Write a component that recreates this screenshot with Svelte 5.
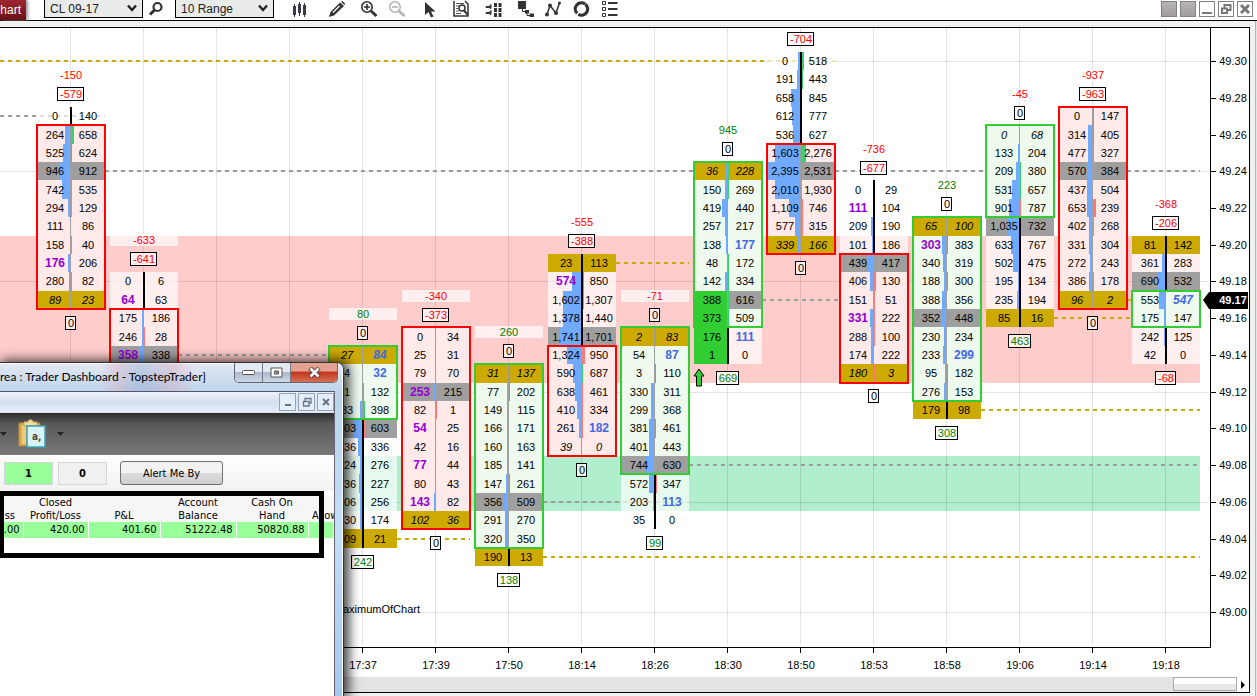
<script>
  let width = $state(1249);
  let height = $state(649);

  let instrument = $state('CL 09-17');
  let period = $state('10 Range');

  const TOP_PRICE = 49.318;
  const TICKS = 33.7;
  const STEP = 73;
  const HALF = 34;

  // rows run down from `high`, one per tick: "bid ask", * = bold, / = italic
  const bars = [
    { time: '', high: 49.27, delta: -150, top: -579, bottom: 0, dir: 'down', body: [1, 10], poc: 3, gold: [10],
      rows: '0 140|264 658|525 624|946 912|742 535|294 129|111 86|158 40|*176 206|280 82|/89 /23' },
    { time: '', high: 49.18, delta: -633, top: -641, bottom: null, dir: 'down', body: [2, 6], poc: 4, gold: [],
      rows: '0 6|*64 63|175 186|246 28|*358 338' },
    null,
    null,
    { time: '17:37', high: 49.14, delta: 80, top: 0, bottom: 242, dir: 'up', body: [0, 3], poc: 4, gold: [0, 10],
      rows: '/27 /*84|4 *32|1 132|83 398|903 603|436 336|224 276|336 227|206 256|230 174|109 21' },
    { time: '17:39', high: 49.15, delta: -340, top: -373, bottom: 0, dir: 'down', body: [0, 10], poc: 3, gold: [10],
      rows: '0 34|25 31|79 70|*253 215|82 1|*54 25|42 16|*77 44|80 43|*143 82|/102 /36' },
    { time: '17:50', high: 49.13, delta: 260, top: 0, bottom: 138, dir: 'up', body: [0, 9], poc: 7, gold: [0, 10],
      rows: '/31 /137|77 202|149 115|166 171|160 163|185 141|147 261|356 509|291 270|320 350|190 13' },
    { time: '18:14', high: 49.19, delta: -555, top: -388, bottom: 0, dir: 'down', body: [5, 10], poc: 4, gold: [0],
      rows: '23 113|*574 850|1,602 1,307|1,378 1,440|1,741 1,701|1,324 950|590 687|638 461|410 334|261 *182|/39 /0' },
    { time: '18:26', high: 49.15, delta: -71, top: 0, bottom: 99, dir: 'up', body: [0, 7], poc: 7, gold: [0],
      rows: '/2 /83|54 *87|3 110|330 311|299 368|381 461|401 443|744 630|572 347|203 *113|35 0' },
    { time: '18:30', high: 49.24, delta: 945, top: 0, bottom: 669, dir: 'up', body: [0, 8], poc: 7, gold: [0], stacked: 7,
      rows: '/36 /228|150 269|419 440|257 217|138 *177|48 172|142 334|388 616|373 509|176 *111|1 0' },
    { time: '18:50', high: 49.3, delta: null, top: -704, bottom: 0, dir: 'down', body: [5, 10], poc: 6, gold: [10],
      rows: '0 518|191 443|658 845|612 777|536 627|1,603 2,276|2,395 2,531|2,010 1,930|1,109 746|577 315|/339 /166' },
    { time: '18:53', high: 49.23, delta: -736, top: -677, bottom: 0, dir: 'down', body: [4, 10], poc: 4, gold: [10],
      rows: '0 29|*111 104|209 190|101 186|439 417|406 130|151 51|*331 222|288 100|174 222|/180 /3' },
    { time: '18:58', high: 49.21, delta: 223, top: 0, bottom: 308, dir: 'up', body: [0, 9], poc: 5, gold: [0, 10],
      rows: '/65 /100|*303 383|340 319|188 300|388 356|352 448|230 234|233 *299|95 182|276 153|179 98' },
    { time: '19:06', high: 49.26, delta: -45, top: 0, bottom: 463, dir: 'up', body: [0, 4], poc: 5, gold: [10],
      rows: '/0 /68|133 204|209 380|531 657|901 787|1,035 732|633 767|502 475|195 134|235 194|85 16' },
    { time: '19:14', high: 49.27, delta: -937, top: -963, bottom: 0, dir: 'down', body: [0, 10], poc: 3, gold: [10],
      rows: '0 147|314 405|477 327|570 384|437 504|653 239|402 268|331 304|272 243|386 178|/96 /2' },
    { time: '19:18', high: 49.2, delta: -368, top: -206, bottom: -68, dir: 'up', body: [3, 4], poc: 2, gold: [0],
      rows: '81 142|361 283|690 532|553 /*547|175 147|242 125|42 0' }
  ];

  // naked levels: from the right side of one bar to the left or right side of another
  const levels = [
    { price: 49.3, kind: 'gold', from: -2, to: 10, through: true },
    { price: 49.27, kind: 'gray', from: -2, to: 0, through: true },
    { price: 49.24, kind: 'gray', from: 0, to: 9 },
    { price: 49.14, kind: 'gray', from: 1, to: 4 },
    { price: 49.04, kind: 'gold', from: 4, to: 5, through: true },
    { price: 49.03, kind: 'gold', from: 6, to: 15, through: true },
    { price: 49.06, kind: 'gray', from: 6, to: 8, through: true },
    { price: 49.19, kind: 'gold', from: 7, to: 8, through: true },
    { price: 49.08, kind: 'gray', from: 8, to: 15, through: true },
    { price: 49.17, kind: 'gray', from: 9, to: 11 },
    { price: 49.24, kind: 'gray', from: 10, to: 13 },
    { price: 49.11, kind: 'gold', from: 12, to: 15, through: true },
    { price: 49.16, kind: 'gold', from: 13, to: 15 },
    { price: 49.24, kind: 'gray', from: 14, to: 15, through: true },
    { price: 49.17, kind: 'gold', from: 14, to: 15 }
  ];

  const zones = [
    { high: 49.205, low: 49.125, color: '#ffcccc' },
    { high: 49.085, low: 49.055, color: '#b1eecd' }
  ];

  const prices = Array.from({ length: 16 }, (_, i) => 49.3 - i * 0.02);
  const gridPrices = [49.3, 49.24, 49.18, 49.12, 49.06, 49];

  const plotHeight = $derived(height - 30);
  const tick = $derived(plotHeight / TICKS);
  const axisX = $derived(width - 39);

  function yOf(price) {
    return Math.round((TOP_PRICE - price) * 100 * tick);
  }

  function xOf(i) {
    return axisX - 44 - (bars.length - 1 - i) * STEP;
  }

  function parseCell(raw) {
    const text = raw.replace(/[*/]/g, '');
    return { text, value: Number(text.replace(',', '')), bold: raw.includes('*'), italic: raw.includes('/') };
  }

  function parseRows(bar) {
    return bar.rows.split('|').map((row, i) => {
      const [bid, ask] = row.split(' ').map(parseCell);
      const price = bar.high - i * 0.01;
      const y = yOf(price + 0.005);
      const diff = ask.value - bid.value;
      return {
        bid, ask, y, diff,
        h: yOf(price - 0.005) - y,
        mid: yOf(price),
        volume: Math.round((bid.value + ask.value) * 0.0067),
        deltaWidth: Math.round(Math.abs(diff) * 0.0067),
        kind: bar.gold.includes(i) ? 'gold' : bar.poc === i ? 'poc' : i >= bar.body[0] && i <= bar.body[1] ? bar.dir : 'plain',
        wick: i < bar.body[0] || i > bar.body[1],
        stacked: bar.stacked !== undefined && i >= bar.stacked
      };
    });
  }

  function sign(n) {
    return n < 0 ? 'neg' : n > 0 ? 'pos' : 'zero';
  }

  function tagWidth(n) {
    return Math.round(String(Math.abs(n)).length * 6.1 + (n < 0 ? 4 : 0)) + 4;
  }
</script>

{#snippet tag(value, x, y)}
  {@const w = tagWidth(value)}
  <rect class="tag" x={x - Math.ceil(w / 2) - 0.5} y={y - 6.5} width={w} height="13" />
  <text class={sign(value)} {x} y={y + 4}>{value}</text>
{/snippet}

<div class="page">
  <header class="toolbar">
    <button class="tab">hart</button>
    <div class="picker first">
      <select aria-label="Instrument" bind:value={instrument}>
        <option>CL 09-17</option>
      </select>
      <svg width="10" height="8" viewBox="0 0 10 8"><path d="M1 1.5 5 6 9 1.5" fill="none" stroke="#222" stroke-width="2.4" /></svg>
    </div>
    <button class="icon search" aria-label="Find instrument">
      <svg viewBox="0 0 16 16"><circle cx="9.5" cy="6" r="4" fill="none" stroke="#333" stroke-width="2.2" /><path d="M6.5 9 2 13.5" stroke="#333" stroke-width="3" /></svg>
    </button>
    <div class="picker">
      <select aria-label="Period" bind:value={period}>
        <option>10 Range</option>
      </select>
      <svg width="10" height="8" viewBox="0 0 10 8"><path d="M1 1.5 5 6 9 1.5" fill="none" stroke="#222" stroke-width="2.4" /></svg>
    </div>

    <button class="icon style" aria-label="Bar style">
      <svg viewBox="0 0 16 16"><path d="M3.5 3v13M8.5 1v14M13.5 2v14" stroke="#4a2f3a" /><path d="M3.5 5v9M8.5 3v9M13.5 4v10" stroke="#3a3a4a" stroke-width="3" /></svg>
    </button>
    <div class="tools">
      <button class="icon" aria-label="Draw">
        <svg viewBox="0 0 16 16"><path d="M0 16 1.5 11 11 1.5 15 5 5 14.5Z" fill="#333" /><path d="M4 11.5 10.5 5" stroke="#fff" stroke-width="1.3" /><path d="M12 1 13.5 0 16 2.5 15.5 4" fill="#333" /></svg>
      </button>
      <div class="pair">
        <button class="icon" aria-label="Zoom in">
          <svg viewBox="0 0 16 16"><g fill="none" stroke="#333"><circle cx="6" cy="6" r="5.2" stroke-width="1.6" /><path d="M3 6h6M6 3v6" stroke-width="1.6" /><path d="m10 10 5.5 5" stroke-width="3" /></g></svg>
        </button>
        <button class="icon" aria-label="Zoom out" disabled>
          <svg viewBox="0 0 16 16"><g fill="none" stroke="#b4b4b4"><circle cx="6" cy="6" r="5.2" stroke-width="1.6" /><path d="M3 6h6" stroke-width="1.6" /><path d="m10 10 5.5 5" stroke-width="3" /></g></svg>
        </button>
      </div>
      <button class="icon" aria-label="Pointer">
        <svg viewBox="0 0 16 16"><path d="M4 1v13l3.5-3 2.5 5.500 2.500-1-2.500-5h4.500Z" fill="#333" /></svg>
      </button>
      <button class="icon" aria-label="Data box">
        <svg viewBox="0 0 16 16"><path d="M1 0v15h14V3L12 0" fill="none" stroke="#333" stroke-width="1.5" /><path d="M3 2.5h8M3 5h3M3 7.500h2M3 10h3M3 12.500h5" stroke="#555" /><circle cx="9" cy="7" r="3" fill="#fff" stroke="#333" stroke-width="1.5" /><path d="m11 9.500 4 4.500" stroke="#333" stroke-width="2" /></svg>
      </button>
      <button class="icon" aria-label="Strategies">
        <svg viewBox="0 0 16 16"><path d="M1 5.500h3l2-2v4l-2-1H1zM1 11.500h3l2-2v4l-2-1H1z" fill="#333" stroke="#333" /><path d="M10.500 2v14M15 2v14" stroke="#333" stroke-width="3" stroke-dasharray="4 1" /></svg>
      </button>
      <div class="pair">
        <button class="icon" aria-label="Drawing objects">
          <svg viewBox="0 0 16 16"><path d="M1 0h8v8H1zM8 9h4v3.500H8zM12.500 12.500H17V16h-4.500z" fill="#333" /><path d="M5.500 7v3.500H9M10 11v3.500h3" fill="none" stroke="#333" /></svg>
        </button>
        <button class="icon" aria-label="Indicators">
          <svg viewBox="0 0 16 16"><path d="M2 13.500 5 4.500 11 12 14.500 2" fill="none" stroke="#333" stroke-width="1.500" /><g fill="#333"><circle cx="2" cy="13.500" r="2" /><circle cx="5" cy="4.500" r="2" /><circle cx="11" cy="12" r="2" /><circle cx="14.500" cy="2" r="1.500" /></g></svg>
        </button>
        <button class="icon" aria-label="Reload">
          <svg viewBox="0 0 16 16"><circle cx="8.500" cy="8" r="6.200" fill="none" stroke="#333" stroke-width="3.200" stroke-dasharray="18 1.5 18 1.5" transform="rotate(-50 8.500 8)" /></svg>
        </button>
        <button class="icon" aria-label="Properties">
          <svg viewBox="0 0 16 16"><g fill="none" stroke="#333"><path d="M1.500.5h3v3h-3zM1.500 6.500h3v3h-3zM1.500 12.500h3v3h-3z" /><path d="M7 2h9.500M7 8h9.500M7 14h9.500" stroke-width="2" /></g></svg>
        </button>
      </div>
    </div>

    <div class="window-buttons">
      <button class="solid" aria-label="Link instrument"></button>
      <button class="solid" aria-label="Link interval"></button>
      <button aria-label="Minimize"><svg viewBox="0 0 14 14"><path d="M2 11h10" stroke="#777" stroke-width="2" /></svg></button>
      <button aria-label="Restore"><svg viewBox="0 0 14 14"><path d="M5.500 6V3h6v5h-3M3 6.500h5v4.500H3z" fill="none" stroke="#777" stroke-width="2" /></svg></button>
      <button aria-label="Close"><svg viewBox="0 0 14 14"><path d="m3 3 8 8m0-8-8 8" stroke="#777" stroke-width="3" /></svg></button>
    </div>
  </header>

  <main class="workspace">
    <div class="frame">
      <div class="chart" bind:clientWidth={width} bind:clientHeight={height}>
        <svg {width} {height}>
          {#each zones as zone}
            <rect x="0" y={yOf(zone.high)} width={axisX - 10} height={yOf(zone.low) - yOf(zone.high)} fill={zone.color} />
          {/each}

          {#each bars as _, i}
            <rect class="grid" x={xOf(i) - 1} y="0" width="1" height={plotHeight - 2} />
          {/each}
          {#each gridPrices as price}
            <rect class="grid" x="0" y={yOf(price)} width={axisX - 1} height="1" />
          {/each}

          {#each levels as level}
            <line
              class="level {level.kind}"
              x1={Math.max(0, xOf(level.from) + HALF)}
              x2={xOf(level.to) + (level.through ? HALF : -HALF)}
              y1={yOf(level.price)}
              y2={yOf(level.price)}
            />
          {/each}

          <text class="note" x={xOf(5) - 16} y={yOf(49) + 1}>MaximumOfChart</text>

          {#each bars as bar, i}
            {#if bar}
              {@const x = xOf(i)}
              {@const rows = parseRows(bar)}
              {@const bodyTop = yOf(bar.high - bar.body[0] * 0.01 + 0.005)}
              {@const bodyBottom = yOf(bar.high - bar.body[1] * 0.01 - 0.005)}
              {#if bar.delta !== null}
                <rect class="plain" x={x - HALF} y={yOf(bar.high) - 47} width={HALF * 2} height="12" />
                <text class={sign(bar.delta)} {x} y={yOf(bar.high) - 37}>{bar.delta}</text>
              {/if}
              {@render tag(bar.top, x, yOf(bar.high) - 22)}

              {#each rows as row}
                <rect class={row.kind} x={x - HALF} y={row.y} width={HALF * 2} height={row.h} />
                {#if row.volume > 0}
                  <rect class="volume" x={x - row.volume} y={row.y} width={row.volume} height={row.h} />
                {/if}
                {#if row.deltaWidth > 0}
                  <rect class={row.diff > 0 ? 'buying' : 'selling'} {x} y={row.y} width={row.deltaWidth} height={row.h} />
                {/if}
                {#if row.stacked}
                  <rect class="stacked" x={x - HALF} y={row.y} width={HALF} height={row.h} />
                {/if}
                <rect class={row.wick ? 'wick' : 'spine'} x={x - 1} y={row.y} width={row.wick ? 2 : 1} height={row.h} />
              {/each}

              <rect class="body {bar.dir}-edge" x={x - HALF} y={bodyTop} width={HALF * 2} height={bodyBottom - bodyTop} />

              {#each rows as row}
                <text class:bold={row.bid.bold} class:italic={row.bid.italic} class="bid" x={x - 16} y={row.mid + 4}>{row.bid.text}</text>
                <text class:bold={row.ask.bold} class:italic={row.ask.italic} class="ask" x={x + 17} y={row.mid + 4}>{row.ask.text}</text>
              {/each}

              {#if bar.bottom !== null}
                {@render tag(bar.bottom, x, yOf(bar.high - (rows.length - 1) * 0.01) + 23)}
              {/if}
            {/if}
          {/each}

          <path
            class="signal"
            transform="translate({xOf(9) - 29} {yOf(49.13) - 4})"
            d="M0 0 5 7H2.500V17H-2.500V7H-5Z"
          />

          <rect x={axisX} y="0" width="1" height={plotHeight + 1} />
          <rect x="0" y={plotHeight} width={axisX + 1} height="1" />
          {#each prices as price}
            <rect x={axisX + 1} y={yOf(price)} width="5" height="1" />
            <text x={axisX + 23} y={yOf(price) + 4}>{price.toFixed(2)}</text>
          {/each}
          {#each bars as bar, i}
            {#if bar?.time}
              <rect x={xOf(i) - 1} y={plotHeight} width="1" height="6" />
              <text x={xOf(i)} y={plotHeight + 22}>{bar.time}</text>
            {/if}
          {/each}

          <path d="M{axisX - 7} {yOf(49.17)}l6-8h{39}v17h-39z" />
          <text class="last" x={axisX + 23} y={yOf(49.17) + 4}>49.17</text>
        </svg>
      </div>
      <div class="scrollbar">
        <div class="thumb"></div>
        <button aria-label="Scroll right"><svg width="5" height="8" viewBox="0 0 5 8"><path d="M0 0 4 4 0 8z" /></svg></button>
      </div>
    </div>
  </main>

  <section class="window" aria-label="Trader Dashboard">
    <div class="titlebar">
      <h1>rea : Trader Dashboard - TopstepTrader]</h1>
      <div class="caption">
        <button aria-label="Minimize window"><svg width="13" height="6" viewBox="0 0 13 6"><rect x=".5" y=".5" width="12" height="4" rx="1" fill="#fff" stroke="#555" /></svg></button>
        <button aria-label="Maximize window"><svg width="13" height="11" viewBox="0 0 13 11"><path d="M1 1h11v9H1z" fill="#fff" stroke="#555" /><path d="M4.500 4h4v3h-4z" fill="#99a" stroke="#555" /></svg></button>
        <button class="close" aria-label="Close window"><svg width="13" height="11" viewBox="0 0 13 11"><path d="m2 1 9 9m0-9-9 9" stroke="#544" stroke-width="4.500" /><path d="m2.500 1.500 8 8m0-8-8 8" stroke="#fff" stroke-width="2.500" /></svg></button>
      </div>
    </div>
    <div class="client">
      <div class="menubar">
        <button aria-label="Minimize child"><svg width="10" height="10" viewBox="0 0 10 10"><path d="M2 8h6" stroke="#678" stroke-width="2" /></svg></button>
        <button aria-label="Restore child"><svg width="10" height="10" viewBox="0 0 10 10"><path d="M3 4V1.500h6V6H7M1.500 4.500H7V9H1.500z" fill="none" stroke="#678" stroke-width="1.300" /></svg></button>
        <button aria-label="Close child"><svg width="10" height="10" viewBox="0 0 10 10"><path d="m2 2 6 6m0-6-6 6" stroke="#678" stroke-width="2" /></svg></button>
      </div>
      <div class="ribbon">
        <svg width="7" height="4" viewBox="0 0 7 4"><path d="M0 0h7L3.500 4z" fill="#222" /></svg>
        <button class="paste" aria-label="Paste">
          <svg width="28" height="30" viewBox="0 0 28 30">
            <rect x="1" y="4" width="21" height="23" rx="1" fill="#dcae50" stroke="#b98a35" />
            <rect x="4" y="6" width="4" height="19" fill="#efcb79" />
            <path d="M6 3h4c0-3 5-3 5 0h4v4H6z" fill="#f0dca0" stroke="#c8a45a" />
            <rect x="9" y="7" width="18" height="21" fill="#d8f3f8" stroke="#38a3b8" stroke-width="1.500" />
            <text x="14" y="21" font-size="10" font-weight="bold" fill="#54432a">a,</text>
          </svg>
        </button>
        <svg width="7" height="4" viewBox="0 0 7 4"><path d="M0 0h7L3.500 4z" fill="#222" /></svg>
      </div>
      <div class="alerts">
        <input class="on" aria-label="Open positions" value="1" readonly />
        <input aria-label="Working orders" value="0" readonly />
        <button>Alert Me By</button>
      </div>
      <div class="accounts">
        <table>
          <colgroup><col class="c-cut" /><col class="c-closed" /><col class="c-pl" /><col class="c-balance" /><col class="c-cash" /><col /></colgroup>
          <thead>
            <tr><th class="cut">ss</th><th>Closed<br />Profit/Loss</th><th>P&amp;L</th><th>Account<br />Balance</th><th>Cash On<br />Hand</th><th class="next">Allow</th></tr>
          </thead>
          <tbody>
            <tr><td>.00</td><td>420.00</td><td>401.60</td><td>51222.48</td><td>50820.88</td><td></td></tr>
          </tbody>
        </table>
        <div class="highlight"></div>
      </div>
    </div>
  </section>
</div>

<style>
  :global(body) {
    margin: 0;
    background: #e6e6e6;
  }

  .page {
    position: relative;
    display: flex;
    flex-direction: column;
    height: 100vh;
    min-height: 500px;
    overflow: hidden;
    font-family: "Liberation Sans", Arial, sans-serif;
    font-size: 12px;
    color: #000;
  }

  button {
    padding: 0;
    border: 0;
    background: none;
    font: inherit;
    color: inherit;
  }

  .toolbar {
    display: flex;
    align-items: flex-start;
    height: 20px;
    flex: none;
    background: #fff;
    border-bottom: 1px solid #000;
  }

  .tab {
    width: 26px;
    height: 20px;
    padding-right: 5px;
    box-sizing: border-box;
    background: linear-gradient(#a02530, #6a1018);
    box-shadow: 2px 0 3px #999;
    color: #fff;
    font-size: 12px;
    text-align: right;
  }

  .picker {
    position: relative;
    height: 18px;
  }

  .picker.first {
    margin-left: 18px;
  }

  .picker select {
    appearance: none;
    display: block;
    width: 99px;
    height: 18px;
    padding: 0 5px;
    border: 1px solid #000;
    border-top: 0;
    border-radius: 0;
    background: #e8ebe8;
    font: 12px "Liberation Sans", Arial, sans-serif;
    color: #222;
  }

  .picker svg {
    position: absolute;
    right: 6px;
    top: 4px;
    pointer-events: none;
  }

  .icon {
    width: 16px;
    height: 17px;
  }

  .icon svg {
    display: block;
    width: 16px;
    height: 16px;
    overflow: visible;
  }

  .search {
    margin: 0 11px 0 5px;
  }

  .style {
    margin: 0 22px 0 17px;
  }

  .tools {
    display: flex;
    gap: 16px;
  }

  .pair {
    display: flex;
    gap: 12px;
  }

  .window-buttons {
    display: flex;
    gap: 3px;
    margin: 1px 4px 0 auto;
  }

  .window-buttons button {
    width: 16px;
    height: 16px;
    border: 1px solid #808080;
    background: #fff;
  }

  .window-buttons .solid {
    background: linear-gradient(#b8b4b8, #a09ca0);
  }

  .window-buttons svg {
    display: block;
  }

  .workspace {
    display: flex;
    flex-direction: column;
    flex: 1;
    min-height: 0;
    margin-right: 1px;
    padding: 6px 5px 3px 0;
    border-right: 1px solid #b4b4b4;
    background: #eff2ef;
  }

  .frame {
    display: flex;
    flex-direction: column;
    flex: 1;
    min-height: 0;
    border: 1px solid #000;
    border-left: 0;
  }

  .chart {
    flex: 1;
    min-height: 0;
    overflow: hidden;
    background: #fff;
  }

  .chart svg {
    display: block;
  }

  .chart text {
    font-size: 11px;
    text-anchor: middle;
  }

  .grid {
    fill: rgba(0, 0, 0, 0.11);
  }

  .level {
    stroke-width: 2;
    stroke-dasharray: 4 4;
  }

  .level.gold {
    stroke: #ccaa00;
  }

  .level.gray {
    stroke: #9c9c9c;
  }

  rect.plain,
  .tag {
    fill: rgba(255, 255, 255, 0.68);
  }

  .tag {
    stroke: #000;
  }

  rect.down {
    fill: #ffe9e9;
  }

  rect.up {
    fill: #eefaee;
  }

  rect.gold {
    fill: #ccaa00;
  }

  rect.poc {
    fill: #9f9f9f;
  }

  .volume {
    fill: #70aaff;
  }

  .buying {
    fill: #38d070;
  }

  .selling {
    fill: #ff7878;
  }

  .stacked {
    fill: #32cd32;
  }

  .wick {
    fill: #000;
  }

  .spine {
    fill: #a0a0a0;
  }

  .body {
    fill: none;
    stroke-width: 2;
  }

  .down-edge {
    stroke: #ff0000;
  }

  .up-edge {
    stroke: #32cd32;
  }

  .neg {
    fill: #ff0000;
  }

  .pos {
    fill: #008000;
  }

  .italic {
    font-style: italic;
  }

  .chart .bold {
    font-size: 12px;
    font-weight: bold;
  }

  .bid.bold {
    fill: #9400d3;
  }

  .ask.bold {
    fill: #4169e1;
  }

  .chart .note {
    text-anchor: end;
  }

  .chart .last {
    fill: #fff;
    font-weight: bold;
  }

  .signal {
    fill: #32cd32;
    stroke: #000;
  }

  .scrollbar {
    display: flex;
    justify-content: flex-end;
    flex: none;
    height: 15px;
    background: #e3e3e3;
  }

  .thumb {
    width: 62px;
    height: 12px;
    border: 1px solid #aaa;
    background: linear-gradient(#fff 50%, #e8e8e8 50%);
  }

  .scrollbar button {
    width: 12px;
    background: #fff;
  }

  .window {
    position: absolute;
    left: 0;
    top: 362px;
    bottom: 0;
    width: 344px;
    box-sizing: border-box;
    display: flex;
    flex-direction: column;
    padding-right: 8px;
    border-top: 1px solid #333;
    border-right: 1px solid #333;
    border-radius: 0 7px 0 0;
    background: linear-gradient(#e4e8f2, #bcd4ec 30px, #c4dff8 50%, #a4c8ec);
    box-shadow: inset -1px 1px #fff, 3px 0 12px 2px rgba(0, 0, 0, 0.75);
  }

  .titlebar {
    display: flex;
    justify-content: space-between;
    height: 28px;
    flex: none;
    margin-right: -3px;
    background: linear-gradient(90deg, transparent 100px, rgba(220, 150, 170, 0.3) 118px, rgba(90, 130, 190, 0.25) 140px, rgba(220, 150, 170, 0.3) 175px, transparent 195px);
  }

  h1 {
    margin: 0;
    font: 12px/28px Lato, "Open Sans", sans-serif;
    white-space: nowrap;
  }

  .caption {
    display: flex;
    height: 19px;
    flex: none;
    border: 1px solid #667;
    border-top: 0;
    border-radius: 0 0 5px 5px;
    overflow: hidden;
  }

  .caption button {
    display: flex;
    align-items: center;
    justify-content: center;
    width: 28px;
    border-right: 1px solid #778;
    background: linear-gradient(#e4e8f2 45%, #b0b8cc 50%, #ccd8e8);
  }

  .caption .close {
    width: 46px;
    border: 0;
    background: linear-gradient(#e4a090 40%, #c03820 50%, #d87050);
  }

  .client {
    flex: 1;
    min-height: 0;
    border-top: 1px solid #556;
    border-right: 1px solid #667;
    background: #fff;
    font-family: "DejaVu Sans Condensed", "DejaVu Sans", "Noto Sans", sans-serif;
    font-size: 11px;
  }

  .menubar {
    display: flex;
    justify-content: flex-end;
    gap: 2px;
    height: 18px;
    padding: 1px 0 1px;
    border-bottom: 1px solid #dde;
    background: linear-gradient(#eef2fa, #d4dff0 50%, #e8eef8);
  }

  .menubar button {
    display: flex;
    align-items: center;
    justify-content: center;
    width: 17px;
    box-sizing: border-box;
    border: 1px solid #90a4bc;
    background: #e4eef8;
  }

  .ribbon {
    display: flex;
    align-items: center;
    gap: 11px;
    height: 42px;
    background: linear-gradient(#2c2c2c, #585858 25%, #787878);
  }

  .ribbon svg {
    display: block;
  }

  .alerts {
    display: flex;
    align-items: center;
    gap: 5px;
    height: 36px;
    padding: 0 4px;
    background: linear-gradient(#fff, #f2f2f2);
  }

  .alerts input {
    width: 49px;
    height: 23px;
    box-sizing: border-box;
    padding: 0;
    border: 1px solid #d4d4dc;
    background: #f0f0f0;
    font: bold 11px "DejaVu Sans Condensed", sans-serif;
    text-align: center;
  }

  .alerts .on {
    background: #99ff99;
  }

  .alerts button {
    width: 103px;
    height: 24px;
    margin-left: 8px;
    border: 1px solid #707070;
    border-radius: 3px;
    background: linear-gradient(#f2f2f2 50%, #dcdcdc 50%, #cfcfcf);
  }

  .accounts {
    position: relative;
    height: 67px;
    overflow: hidden;
  }

  table {
    width: 100%;
    margin-top: 5px;
    border-collapse: collapse;
    table-layout: fixed;
  }

  .c-cut {
    width: 23px;
  }

  .c-closed {
    width: 65px;
  }

  .c-pl,
  .c-cash {
    width: 72px;
  }

  .c-balance {
    width: 76px;
  }

  th {
    height: 26px;
    padding: 0;
    background: #f6f6f6;
    font-weight: normal;
    line-height: 13px;
    vertical-align: bottom;
  }

  th.cut {
    padding-right: 8px;
    text-align: right;
  }

  th.next {
    padding-left: 4px;
    text-align: left;
    overflow: hidden;
  }

  td {
    height: 16px;
    padding: 0 3px 0 0;
    border-right: 1px solid #fff;
    background: #99ff99;
    text-align: right;
    line-height: 16px;
  }

  /* marker box drawn over the account figures */
  .highlight {
    position: absolute;
    inset: 0 10px 0 -1px;
    border: 5px solid #000;
  }
</style>
